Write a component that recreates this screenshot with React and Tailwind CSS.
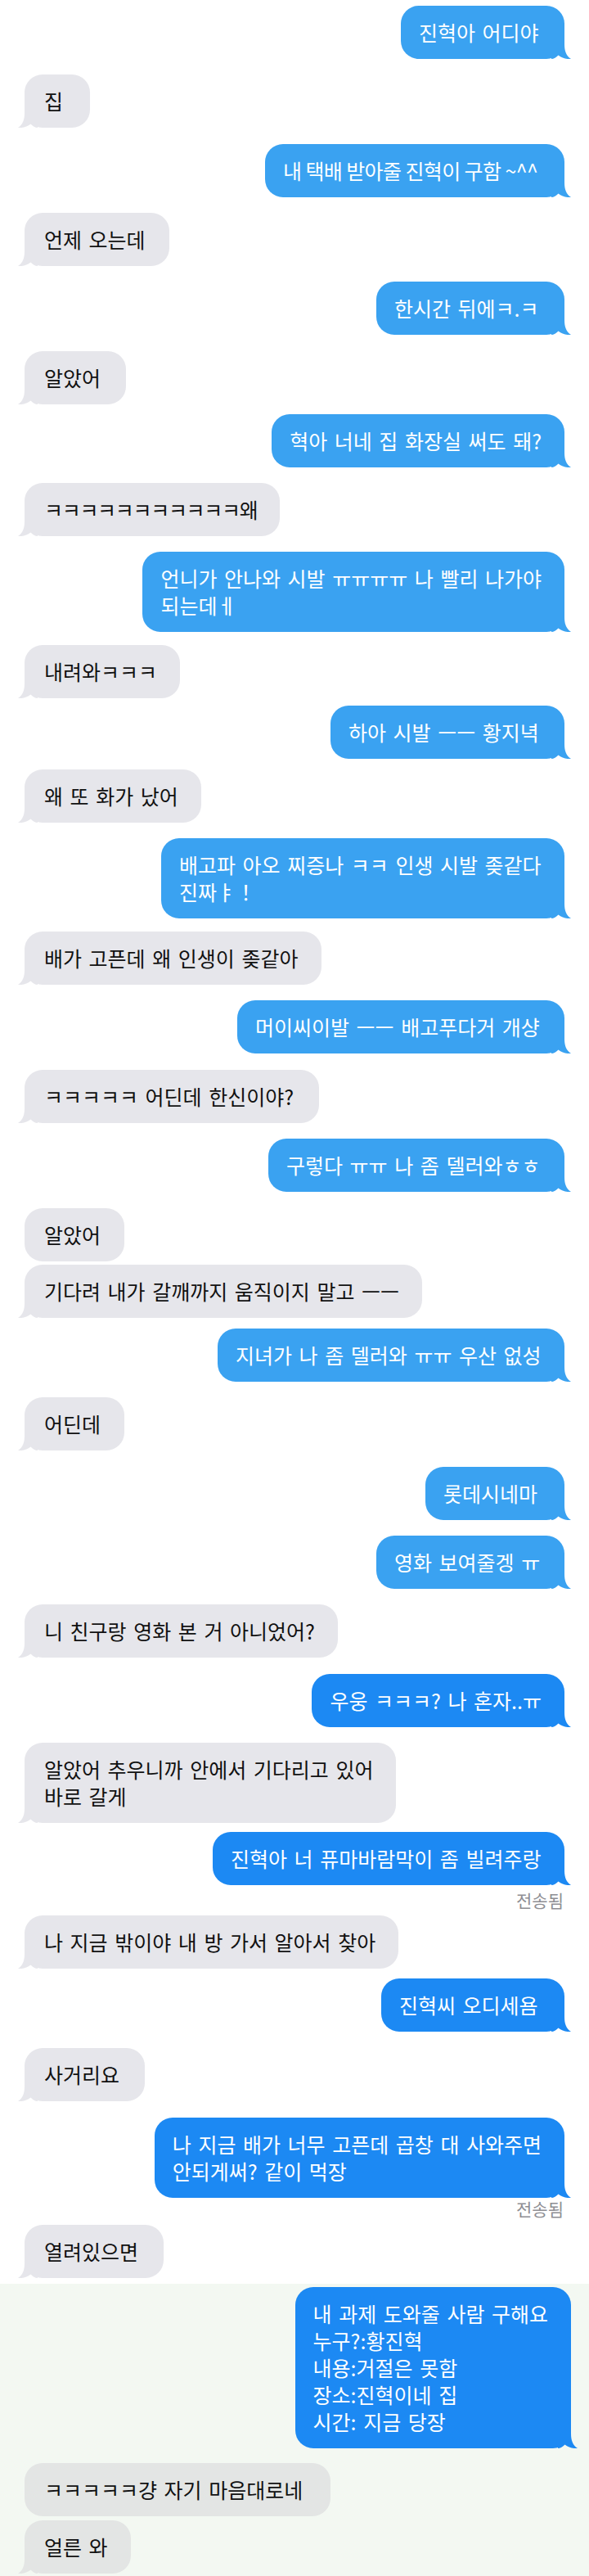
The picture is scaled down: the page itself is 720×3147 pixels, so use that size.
import React from "react";

const LIGHT = "#3aa2f1";
const DARK = "#1c89f3";
const GRAY = "#e6e6eb";

const msgs = [
  { s: "r", t: ["진혁아 어디야"], mt: 7, w: "min-w-[200px]" },
  { s: "l", t: ["집"], mt: 19, w: "min-w-[80px]" },
  { s: "r", t: ["내 택배 받아줄 진혁이 구함 ~^^"], mt: 20, w: "min-w-[366px]", tight: "tracking-[-0.6px] [word-spacing:0px]" },
  { s: "l", t: ["언제 오는데"], mt: 19, w: "min-w-[177px]" },
  { s: "r", t: ["한시간 뒤에ㅋ.ㅋ"], mt: 19, w: "min-w-[230px]" },
  { s: "l", t: ["알았어"], mt: 20, w: "min-w-[124px]" },
  { s: "r", t: ["혁아 너네 집 화장실 써도 돼?"], mt: 12, w: "min-w-[353px]" },
  { s: "l", t: ["ㅋㅋㅋㅋㅋㅋㅋㅋㅋㅋㅋ왜"], mt: 19, w: "min-w-[310px]", tight: "tracking-[-1.3px]" },
  { s: "r", t: ["언니가 안나와 시발 ㅠㅠㅠㅠ 나 빨리 나가야", "되는데ㅔ"], mt: 19, w: "min-w-[511px]" },
  { s: "l", t: ["내려와ㅋㅋㅋ"], mt: 16, w: "min-w-[186px]" },
  { s: "r", t: ["하아 시발 ㅡㅡ 황지녁"], mt: 9, w: "min-w-[286px]" },
  { s: "l", t: ["왜 또 화가 났어"], mt: 13, w: "min-w-[216px]" },
  { s: "r", t: ["배고파 아오 찌증나 ㅋㅋ 인생 시발 좆같다", "진짜ㅑ！"], mt: 19, w: "min-w-[493px]" },
  { s: "l", t: ["배가 고픈데 왜 인생이 좆같아"], mt: 16, w: "min-w-[363px]" },
  { s: "r", t: ["머이씨이발 ㅡㅡ 배고푸다거 개샹"], mt: 19, w: "min-w-[400px]" },
  { s: "l", t: ["ㅋㅋㅋㅋㅋ 어딘데 한신이야?"], mt: 20, w: "min-w-[360px]" },
  { s: "r", t: ["구렇다 ㅠㅠ 나 좀 델러와ㅎㅎ"], mt: 19, w: "min-w-[362px]" },
  { s: "l", t: ["알았어"], mt: 20, noTail: true, w: "min-w-[122px]" },
  { s: "l", t: ["기다려 내가 갈깨까지 움직이지 말고 ㅡㅡ"], mt: 4, w: "min-w-[484px]" },
  { s: "r", t: ["지녀가 나 좀 델러와 ㅠㅠ 우산 없성"], mt: 13, w: "min-w-[424px]" },
  { s: "l", t: ["어딘데"], mt: 19, w: "min-w-[122px]" },
  { s: "r", t: ["롯데시네마"], mt: 20, w: "min-w-[170px]" },
  { s: "r", t: ["영화 보여줄겡 ㅠ"], mt: 19, w: "min-w-[230px]" },
  { s: "l", t: ["니 친구랑 영화 본 거 아니었어?"], mt: 19, w: "min-w-[374px]" },
  { s: "r", t: ["우웅 ㅋㅋㅋ? 나 혼자..ㅠ"], mt: 20, dark: true, w: "min-w-[306px]" },
  { s: "l", t: ["알았어 추우니까 안에서 기다리고 있어", "바로 갈게"], mt: 19, w: "min-w-[454px]" },
  { s: "r", t: ["진혁아 너 퓨마바람막이 좀 빌려주랑"], mt: 11, dark: true, sent: 8, w: "min-w-[430px]" },
  { s: "l", t: ["나 지금 밖이야 내 방 가서 알아서 찾아"], mt: 9, w: "min-w-[443px]" },
  { s: "r", t: ["진혁씨 오디세욤"], mt: 12, dark: true, w: "min-w-[224px]" },
  { s: "l", t: ["사거리요"], mt: 20, w: "min-w-[147px]" },
  { s: "r", t: ["나 지금 배가 너무 고픈데 곱창 대 사와주면", "안되게써? 같이 먹장"], mt: 20, dark: true, sent: 3, w: "min-w-[500px]" },
  { s: "l", t: ["열려있으면"], mt: 10, w: "min-w-[170px]" },
];

const tail = [
  { s: "r", t: ["내 과제 도와줄 사람 구해요", "누구?:황진혁", "내용:거절은 못함", "장소:진혁이네 집", "시간: 지금 당장"], mt: 3, dark: true, w: "min-w-[336px]", shift: true },
  { s: "l", t: ["ㅋㅋㅋㅋㅋ걍 자기 마음대로네"], mt: 18, noTail: true, soft: true, w: "min-w-[374px]" },
  { s: "l", t: ["얼른 와"], mt: 5, soft: true, w: "min-w-[128px]" },
];

function TailRight({ color }) {
  return (
    <svg width="24" height="24" viewBox="0 0 24 24" className="absolute bottom-0 -right-2">
      <path d="M0 24 L0 0 L16 0 L16 6 C16 14 18 20 24 24 C19 24.6 13 23 8.5 19.5 C6 22 3 24 0 24 Z" fill={color} />
    </svg>
  );
}

function TailLeft({ color }) {
  return (
    <svg width="24" height="24" viewBox="0 0 24 24" className="absolute bottom-0 -left-2">
      <path d="M24 24 L24 0 L8 0 L8 6 C8 14 6 20 0 24 C5 24.6 11 23 15.5 19.5 C18 22 21 24 24 24 Z" fill={color} />
    </svg>
  );
}

function Bubble({ m }) {
  const right = m.s === "r";
  const color = right ? (m.dark ? DARK : LIGHT) : m.soft ? "#e3e5e4" : GRAY;
  const row = right
    ? m.shift
      ? "flex justify-end pr-[22px]"
      : "flex justify-end pr-[30px]"
    : "flex justify-start pl-[30px]";
  const body = right
    ? "relative rounded-[22px] py-[16px] pl-[22px] pr-[28px] text-white"
    : "relative rounded-[22px] py-[16px] pl-[24px] pr-[28px] text-[#111111]";
  const textCls = m.tight
    ? `relative whitespace-nowrap text-[25px] leading-[33px] ${m.tight}`
    : "relative whitespace-nowrap text-[25px] leading-[33px] [word-spacing:3px]";
  return (
    <>
      <div className={row} style={{ marginTop: m.mt }}>
        <div className={`${body} ${m.w}`} style={{ backgroundColor: color }}>
          {!m.noTail && (right ? <TailRight color={color} /> : <TailLeft color={color} />)}
          <div className={textCls}>
            {m.t.map((line, i) => (
              <div key={i}>{line}</div>
            ))}
          </div>
        </div>
      </div>
      {m.sent !== undefined && (
        <div className="flex justify-end pr-[31px]" style={{ marginTop: m.sent }}>
          <span className="text-[21px] leading-[20px] text-[#8e8e93]">전송됨</span>
        </div>
      )}
    </>
  );
}

export default function App() {
  return (
    <div className="flex min-h-[3147px] w-[720px] flex-col bg-white font-['Noto_Sans_CJK_KR','Noto_Sans',sans-serif]">
      {msgs.map((m, i) => (
        <Bubble key={i} m={m} />
      ))}
      <div className="mt-[7px] flex flex-1 flex-col bg-[#f3f8f2] pt-[1px]">
        {tail.map((m, i) => (
          <Bubble key={i} m={m} />
        ))}
      </div>
    </div>
  );
}
